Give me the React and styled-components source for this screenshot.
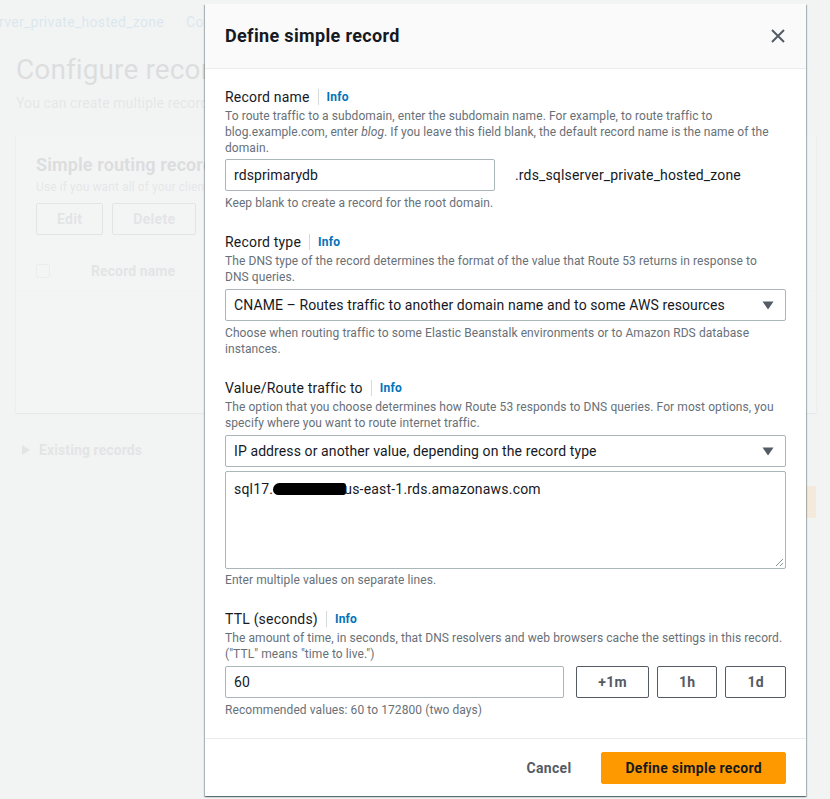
import React from 'react';
import styled, { createGlobalStyle } from 'styled-components';

const GlobalStyle = createGlobalStyle`
  html, body { margin: 0; padding: 0; }
  body {
    font-family: Roboto, "Liberation Sans", Arial, sans-serif;
    color: #16191f;
    background: #f2f3f3;
    letter-spacing: 0.1px;
  }
  * { box-sizing: border-box; }
`;

const Screen = styled.div`
  position: relative;
  width: 830px;
  height: 799px;
  overflow: hidden;
  background: #f2f3f3;
`;

/* ---------- page behind the modal (only its left strip shows) ---------- */

const Page = styled.div`
  padding: 0 14px 0 16px;
`;

const Breadcrumbs = styled.div`
  display: flex;
  align-items: center;
  gap: 11px;
  width: 222px;
  height: 44px;
  margin-left: -17px;
  overflow: hidden;
  font-size: 14px;
  letter-spacing: 0.3px;
  color: #0073bb;
  white-space: nowrap;
`;

const Clip = styled.div`
  width: ${(p) => p.$width || 189}px;
  overflow: hidden;
  white-space: nowrap;
`;

const PageTitle = styled(Clip)`
  margin: 8px 0 0;
  font-size: 28px;
  line-height: 36px;
`;

const PageSub = styled(Clip)`
  margin: 5px 0 0;
  font-size: 14px;
  line-height: 20px;
  color: #687078;
`;

const Card = styled.section`
  margin-top: 22px;
  height: 278px;
  background: #fff;
  box-shadow: 0 1px 1px 0 rgba(0, 28, 36, 0.3), 1px 1px 1px 0 rgba(0, 28, 36, 0.15),
    -1px 1px 1px 0 rgba(0, 28, 36, 0.15);
`;

const CardHead = styled.div`
  padding: 19px 20px 0;
`;

const CardTitle = styled(Clip)`
  font-size: 18px;
  line-height: 22px;
  font-weight: 700;
`;

const CardDesc = styled(Clip)`
  margin-top: 3px;
  font-size: 12px;
  line-height: 16px;
  color: #687078;
`;

const CardActions = styled.div`
  display: flex;
  gap: 9px;
  margin-top: 8px;
`;

const GhostButton = styled.button`
  height: 32px;
  padding: 0 ${(p) => p.$pad || 20}px;
  border: 1px solid #545b64;
  border-radius: 2px;
  background: #fff;
  font: 700 14px Roboto, "Liberation Sans", sans-serif;
  letter-spacing: 0.3px;
  color: #545b64;
`;

const TableHead = styled.div`
  display: flex;
  align-items: center;
  gap: 41px;
  height: 40px;
  margin-top: 16px;
  padding: 0 20px;
  background: #fafafa;
  border-bottom: 1px solid #eaeded;
  font-size: 14px;
  font-weight: 700;
  color: #545b64;
`;

const Checkbox = styled.span`
  width: 14px;
  height: 14px;
  border: 1px solid #aab7b8;
  border-radius: 2px;
  background: #fff;
`;

const Expander = styled.div`
  display: flex;
  align-items: center;
  gap: 9px;
  margin-top: 26px;
  padding-left: 6px;
  font-size: 14px;
  line-height: 22px;
  font-weight: 700;
  color: #545b64;
`;

const PageFooter = styled.div`
  display: flex;
  justify-content: flex-end;
  margin-top: 25px;
`;

/* ---------- modal ---------- */

const Overlay = styled.div`
  position: absolute;
  inset: 0;
  padding: 4px 0 0 205px;
  background: rgba(242, 243, 243, 0.9);
`;

const Modal = styled.div`
  display: flex;
  flex-direction: column;
  width: 601px;
  background: #fff;
  box-shadow: 0 1px 1px 0 rgba(0, 28, 36, 0.3), 1px 1px 1px 0 rgba(0, 28, 36, 0.25),
    -1px 1px 1px 0 rgba(0, 28, 36, 0.25);
`;

const ModalHeader = styled.div`
  display: flex;
  align-items: center;
  justify-content: space-between;
  height: 65px;
  padding: 0 20px;
  background: #fafafa;
  border-bottom: 1px solid #eaeded;
`;

const ModalTitle = styled.h2`
  margin: 0;
  font-size: 18px;
  line-height: 22px;
  font-weight: 700;
  letter-spacing: 0.35px;
`;

const CloseButton = styled.button`
  display: flex;
  padding: 0;
  border: 0;
  background: none;
  color: #545b64;
`;

const ModalBody = styled.div`
  padding: 17px 20px 20px;
`;

const Field = styled.div`
  margin-top: ${(p) => (p.$first ? 0 : 20)}px;
`;

const Label = styled.div`
  display: flex;
  align-items: center;
  font-size: 14px;
  line-height: 22px;
  letter-spacing: 0.2px;
`;

const Info = styled.span`
  margin-left: 8px;
  padding-left: 8px;
  border-left: 1px solid #d5dbdb;
  font-size: 12px;
  line-height: 16px;
  font-weight: 700;
  color: #0073bb;
`;

const Desc = styled.div`
  margin-top: ${(p) => p.$top || 0}px;
  font-size: 12px;
  line-height: 16px;
  letter-spacing: 0.08px;
  color: #687078;
  white-space: nowrap;
`;

const InputRow = styled.div`
  display: flex;
  align-items: center;
  gap: ${(p) => p.$gap}px;
  margin-top: ${(p) => p.$top}px;
`;

const TextBox = styled.div`
  display: flex;
  align-items: center;
  width: ${(p) => p.$width || 'auto'};
  flex: ${(p) => (p.$grow ? 1 : 'none')};
  height: 32px;
  margin-right: ${(p) => p.$after || 0}px;
  padding: 0 8px;
  border: 1px solid #aab7b8;
  border-radius: 2px;
  font-size: 14px;
  color: #16191f;
`;

const Suffix = styled.span`
  font-size: 14px;
  letter-spacing: 0.15px;
`;

const Select = styled.div`
  display: flex;
  align-items: center;
  justify-content: space-between;
  height: 32px;
  margin-top: 4px;
  padding: 0 11px 0 8px;
  border: 1px solid #aab7b8;
  border-radius: 2px;
  font-size: 14px;
  white-space: nowrap;
`;

const TextArea = styled.div`
  position: relative;
  height: 98px;
  margin-top: 4px;
  padding: 6px 8px;
  border: 1px solid #aab7b8;
  border-radius: 2px;
  font-size: 14px;
  line-height: 22px;
  letter-spacing: 0.2px;
`;

const Redaction = styled.span`
  display: inline-block;
  width: 73px;
  height: 12px;
  margin: 0 -2px 0 0;
  vertical-align: -1px;
  background: #000;
  border-radius: 7px 3px 3px 6px;
`;

const ResizeGrip = styled.svg`
  position: absolute;
  right: 1px;
  bottom: 1px;
`;

const ModalFooter = styled.div`
  display: flex;
  justify-content: flex-end;
  align-items: center;
  gap: 10px;
  padding: 13px 20px 12px;
  border-top: 1px solid #eaeded;
`;

const LinkButton = styled.button`
  height: 32px;
  padding: 0 20px;
  border: 0;
  background: none;
  font: 700 14px Roboto, "Liberation Sans", sans-serif;
  letter-spacing: 0.3px;
  color: #545b64;
`;

const PrimaryButton = styled.button`
  height: 32px;
  padding: 0 ${(p) => p.$pad || 20}px;
  border: 1px solid #ff9900;
  border-radius: 2px;
  background: #ff9900;
  font: 700 14px Roboto, "Liberation Sans", sans-serif;
  letter-spacing: 0.3px;
  color: #16191f;
`;

const Caret = () => (
  <svg width="12" height="9" viewBox="0 0 12 9">
    <path d="M0.5 0.5 H11.5 L6 8.5 Z" fill="#545b64" />
  </svg>
);

const App = () => (
  <Screen>
    <GlobalStyle />
    <Page>
      <Breadcrumbs>
        <span>rver_private_hosted_zone</span>
        <svg width="8" height="14" viewBox="0 0 8 14">
          <path d="M1 1 L7 7 L1 13" fill="none" stroke="#879596" strokeWidth="1.4" />
        </svg>
        <span>Configure records</span>
      </Breadcrumbs>
      <PageTitle>Configure records</PageTitle>
      <PageSub>You can create multiple records in the hosted zone.</PageSub>
      <Card>
        <CardHead>
          <CardTitle $width={169}>Simple routing records to add</CardTitle>
          <CardDesc $width={169}>Use if you want all of your clients to be routed to the same resource.</CardDesc>
          <CardActions>
            <GhostButton>Edit</GhostButton>
            <GhostButton>Delete</GhostButton>
          </CardActions>
        </CardHead>
        <TableHead>
          <Checkbox />
          <span>Record name</span>
        </TableHead>
      </Card>
      <Expander>
        <svg width="8" height="10" viewBox="0 0 8 10">
          <path d="M0 0 L8 5 L0 10 Z" fill="#545b64" />
        </svg>
        Existing records
      </Expander>
      <PageFooter>
        <PrimaryButton>Create records</PrimaryButton>
      </PageFooter>
    </Page>

    <Overlay>
      <Modal>
        <ModalHeader>
          <ModalTitle>Define simple record</ModalTitle>
          <CloseButton aria-label="Close">
            <svg width="16" height="16" viewBox="0 0 16 16">
              <path d="M2 2 L14 14 M14 2 L2 14" stroke="currentColor" strokeWidth="2" />
            </svg>
          </CloseButton>
        </ModalHeader>

        <ModalBody>
          <Field $first>
            <Label>
              Record name<Info>Info</Info>
            </Label>
            <Desc>
              To route traffic to a subdomain, enter the subdomain name. For example, to route traffic to
              <br />
              blog.example.com, enter <i>blog</i>. If you leave this field blank, the default record name is
              the name of the
              <br />
              domain.
            </Desc>
            <InputRow $gap={20} $top={3}>
              <TextBox $width="270px">rdsprimarydb</TextBox>
              <Suffix>.rds_sqlserver_private_hosted_zone</Suffix>
            </InputRow>
            <Desc $top={4}>Keep blank to create a record for the root domain.</Desc>
          </Field>

          <Field>
            <Label>
              Record type<Info>Info</Info>
            </Label>
            <Desc>
              The DNS type of the record determines the format of the value that Route 53 returns in response to
              <br />
              DNS queries.
            </Desc>
            <Select>
              CNAME – Routes traffic to another domain name and to some AWS resources
              <Caret />
            </Select>
            <Desc $top={4}>
              Choose when routing traffic to some Elastic Beanstalk environments or to Amazon RDS database
              <br />
              instances.
            </Desc>
          </Field>

          <Field>
            <Label>
              Value/Route traffic to<Info>Info</Info>
            </Label>
            <Desc>
              The option that you choose determines how Route 53 responds to DNS queries. For most options, you
              <br />
              specify where you want to route internet traffic.
            </Desc>
            <Select>
              IP address or another value, depending on the record type
              <Caret />
            </Select>
            <TextArea>
              sql17.
              <Redaction />
              us-east-1.rds.amazonaws.com
              <ResizeGrip width="9" height="9" viewBox="0 0 9 9">
                <path d="M1 8 L8 1 M5 8 L8 5" stroke="#879596" strokeWidth="1" />
              </ResizeGrip>
            </TextArea>
            <Desc $top={3}>Enter multiple values on separate lines.</Desc>
          </Field>

          <Field>
            <Label>
              TTL (seconds)<Info>Info</Info>
            </Label>
            <Desc>
              The amount of time, in seconds, that DNS resolvers and web browsers cache the settings in this record.
              <br />
              ("TTL" means "time to live.")
            </Desc>
            <InputRow $gap={8} $top={4}>
              <TextBox $grow $after={4}>60</TextBox>
              <GhostButton $pad={21}>+1m</GhostButton>
              <GhostButton $pad={21}>1h</GhostButton>
              <GhostButton $pad={21}>1d</GhostButton>
            </InputRow>
            <Desc $top={4}>Recommended values: 60 to 172800 (two days)</Desc>
          </Field>
        </ModalBody>

        <ModalFooter>
          <LinkButton>Cancel</LinkButton>
          <PrimaryButton $pad={23}>Define simple record</PrimaryButton>
        </ModalFooter>
      </Modal>
    </Overlay>
  </Screen>
);

export default App;
